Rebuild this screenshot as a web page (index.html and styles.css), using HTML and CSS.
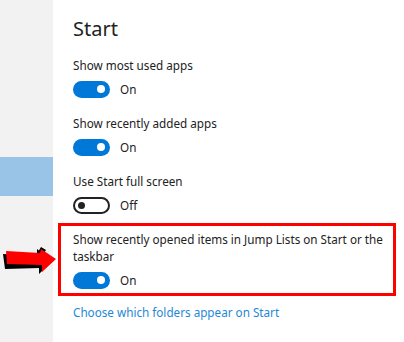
FILE: index.html
```html
<!DOCTYPE html>
<html>
<head>
<meta charset="utf-8">
<link rel="stylesheet" href="styles.css">
</head>
<body>
<div class="page">
  <nav class="sidebar">
    <div class="nav-selected"></div>
  </nav>
  <main class="main">
    <h1 class="title">Start</h1>
    <div class="setting">
      <div class="label">Show most used apps</div>
      <div class="toggle-row"><span class="toggle on"><span class="knob"></span></span><span class="state">On</span></div>
    </div>
    <div class="setting">
      <div class="label">Show recently added apps</div>
      <div class="toggle-row"><span class="toggle on"><span class="knob"></span></span><span class="state">On</span></div>
    </div>
    <div class="setting">
      <div class="label">Use Start full screen</div>
      <div class="toggle-row"><span class="toggle off"><span class="knob"></span></span><span class="state">Off</span></div>
    </div>
    <div class="setting highlight">
      <div class="label">Show recently opened items in Jump Lists on Start or the taskbar</div>
      <div class="toggle-row"><span class="toggle on"><span class="knob"></span></span><span class="state">On</span></div>
    </div>
    <a class="link" href="#">Choose which folders appear on Start</a>
  </main>
  <svg class="arrow" width="60" height="32" viewBox="0 244 60 32">
    <polygon fill="#000" points="3,254 37,256 37,249 52,261 39,274 39,268 5,269"/>
    <polygon fill="#000" points="38,252 41,247 46,250 44,253"/>
    <polygon fill="#ff0000" points="6,251 40,253 41,249 56,259 42,272 42,265 7,264"/>
  </svg>
</div>
</body>
</html>
```

FILE: styles.css
```css
html, body {
  margin: 0;
  padding: 0;
  background: #ffffff;
}

.page {
  position: relative;
  display: flex;
  width: 404px;
  height: 342px;
  overflow: hidden;
  font-family: "Noto Sans", "Open Sans", sans-serif;
  color: #222222;
}

.sidebar {
  width: 53px;
  flex: none;
  background: #f2f2f2;
  padding-top: 157px;
  box-sizing: border-box;
}

.nav-selected {
  height: 39px;
  background: #99c4e8;
}

.main {
  flex: 1;
  display: flex;
  flex-direction: column;
  align-items: flex-start;
  padding-left: 20px;
  padding-top: 16px;
}

.title {
  margin: 0 0 15px;
  font-size: 20px;
  line-height: 26px;
  font-weight: 400;
  color: #222222;
}

.setting {
  display: flex;
  flex-direction: column;
  margin-bottom: 17px;
}

.label {
  font-size: 11.7px;
  line-height: 17px;
}

.toggle-row {
  display: flex;
  align-items: center;
  height: 18px;
  margin-top: 6px;
}

.toggle {
  position: relative;
  box-sizing: border-box;
  width: 37px;
  height: 17px;
  border-radius: 9px;
  display: flex;
  align-items: center;
}

.toggle.on {
  background: #0078d7;
  justify-content: flex-end;
  padding-right: 5px;
}

.toggle.off {
  background: #ffffff;
  border: 2px solid #222222;
  padding-left: 3px;
}

.knob {
  width: 8px;
  height: 8px;
  border-radius: 50%;
}

.toggle.on .knob {
  background: #ffffff;
}

.toggle.off .knob {
  background: #222222;
  width: 7px;
  height: 7px;
}

.state {
  margin-left: 10px;
  font-size: 11.7px;
  line-height: 17px;
}

.setting.highlight {
  margin-left: -15px;
  margin-top: -8.5px;
  width: 338px;
  box-sizing: border-box;
  border: 3px solid #ff0000;
  padding: 5.5px 4px 3.5px 12px;
  margin-bottom: 8.5px;
}

.link {
  font-size: 11.7px;
  line-height: 17px;
  color: #1e88d6;
  text-decoration: none;
}

.arrow {
  position: absolute;
  left: 0;
  top: 244px;
}
```
